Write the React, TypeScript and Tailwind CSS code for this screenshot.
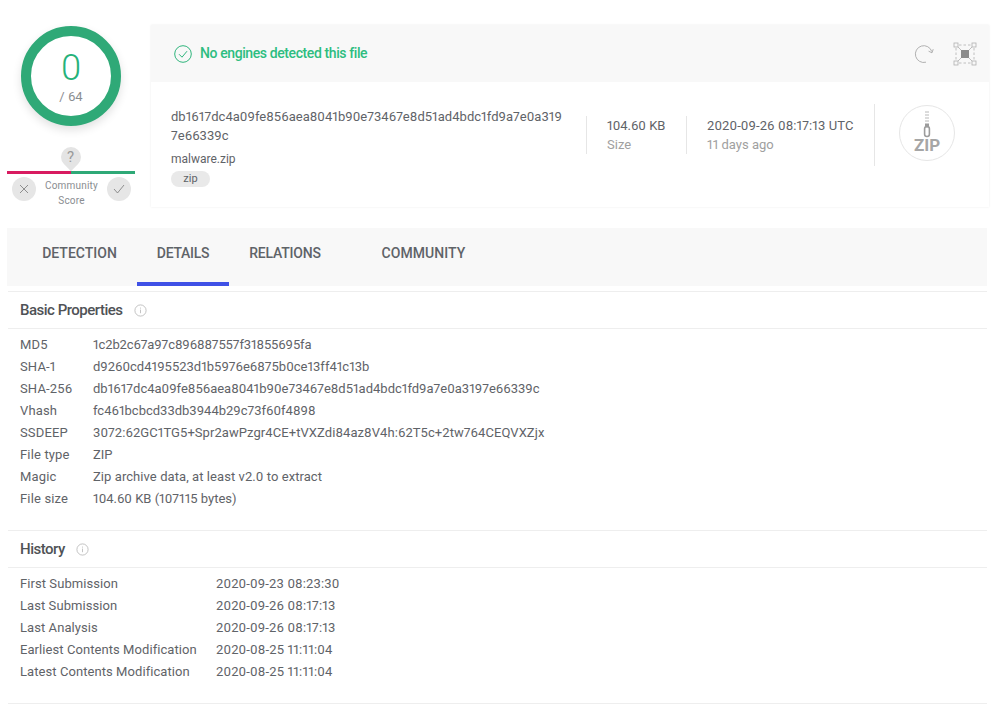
const font = "font-['Roboto',sans-serif]";

const props: [string, string, string][] = [
  ["MD5", "1c2b2c67a97c896887557f31855695fa", "tracking-[-0.12px]"],
  ["SHA-1", "d9260cd4195523d1b5976e6875b0ce13ff41c13b", "tracking-normal"],
  ["SHA-256", "db1617dc4a09fe856aea8041b90e73467e8d51ad4bdc1fd9a7e0a3197e66339c", "tracking-normal"],
  ["Vhash", "fc461bcbcd33db3944b29c73f60f4898", "tracking-normal"],
  ["SSDEEP", "3072:62GC1TG5+Spr2awPzgr4CE+tVXZdi84az8V4h:62T5c+2tw764CEQVXZjx", "tracking-[0.07px]"],
  ["File type", "ZIP", "tracking-normal"],
  ["Magic", "Zip archive data, at least v2.0 to extract", "tracking-[0.07px]"],
  ["File size", "104.60 KB (107115 bytes)", "tracking-normal"],
];
const hist: [string, string][] = [
  ["First Submission", "2020-09-23 08:23:30"],
  ["Last Submission", "2020-09-26 08:17:13"],
  ["Last Analysis", "2020-09-26 08:17:13"],
  ["Earliest Contents Modification", "2020-08-25 11:11:04"],
  ["Latest Contents Modification", "2020-08-25 11:11:04"],
];

function Info() {
  return (
    <svg width="13" height="13" viewBox="0 0 13 13" fill="none" stroke="#b5b5b5" strokeWidth="0.8">
      <circle cx="6.5" cy="6.5" r="5.6" />
      <path d="M6.5 5.6v3.6M6.5 3.6v1" />
    </svg>
  );
}

function ZipIcon() {
  return (
    <div className="w-14 h-14 rounded-full border border-[#e6e6e6] flex flex-col items-center justify-start pt-[5px]">
      <svg width="10" height="27" viewBox="0 0 10 27" fill="none">
        <path d="M3 1h4M3 4h4M3 7h4M3 10h4" stroke="#b8b8b8" strokeWidth="1" />
        <rect x="2.6" y="15.5" width="4.8" height="10" rx="2.2" fill="#fff" stroke="#9c9c9c" strokeWidth="1.6" />
        <rect x="3" y="12.5" width="4" height="4" fill="#9c9c9c" />
      </svg>
      <span className="text-[17px] leading-[15px] font-bold text-[#a6a6a6]">ZIP</span>
    </div>
  );
}

export default function App() {
  return (
    <div className={`${font} proportional-nums w-[994px] h-[704px] bg-white overflow-hidden text-[#5f6368]`}>
      <div className="flex pt-[25px] pl-[7px] h-[228px]">
        <div className="w-[128px] flex flex-col items-center shrink-0">
          <div className="w-[100px] h-[100px] rounded-full border-[10px] border-[#2fa977] bg-white flex flex-col items-center shadow-[0_4px_10px_rgba(0,0,0,0.12)] mt-px">
            <span className="text-[36px] leading-[40px] mt-[12px] text-[#26b27a] font-light">0</span>
            <span className="text-[13px] leading-4 mt-px text-[#8a8d91]">/ 64</span>
          </div>
          <div className="relative w-full h-[3px] mt-[45px] flex">
            <div className="w-1/2 bg-[#d81b60]" />
            <div className="w-1/2 bg-[#2fa977]" />
            <div className="absolute left-[54px] -top-[24px] w-5 h-5 rounded-full rounded-br-none rotate-45 bg-[#e4e4e4] flex items-center justify-center">
              <span className="-rotate-45 text-[15px] text-[#9a9a9a]">?</span>
            </div>
          </div>
          <div className="w-full flex items-start justify-between pl-[5px] pr-[4px] mt-[3px]">
            <div className="w-6 h-6 rounded-full bg-[#e6e6e6] flex items-center justify-center">
              <svg width="10" height="10" viewBox="0 0 10 10" stroke="#777" strokeWidth="0.8"><path d="M1 1l8 8M9 1l-8 8" /></svg>
            </div>
            <div className="text-[10px] leading-[15px] text-center text-[#8a8d91] pt-px tracking-[0.2px]">Community<br />Score</div>
            <div className="w-6 h-6 rounded-full bg-[#e6e6e6] flex items-center justify-center">
              <svg width="12" height="10" viewBox="0 0 12 10" fill="none" stroke="#777" strokeWidth="0.8"><path d="M1 5l3.5 4L11 1" /></svg>
            </div>
          </div>
        </div>

        <div className="w-[838px] ml-[16px] shrink-0 shadow-[0_0_2px_rgba(0,0,0,0.08)] h-[182px]">
          <div className="h-[57px] bg-[#f8f8f8] flex items-center pl-[23px] pr-[12px]">
            <svg width="18" height="18" viewBox="0 0 18 18" fill="none" stroke="#2fb57c" strokeWidth="1"><circle cx="9" cy="9" r="8.3" /><path d="M5 9.2l3 3 5-6" /></svg>
            <span className="ml-2 text-[14px] font-medium text-[#2dbd80] tracking-[-0.4px]">No engines detected this file</span>
            <div className="ml-auto flex items-center gap-[19px]">
              <svg width="20" height="20" viewBox="0 0 20 20" fill="none" stroke="#a8a8a8" strokeWidth="0.9"><path d="M12 18.2A8.4 8.4 0 1 1 17.8 7.6" /><path d="M14.6 7.2l3.4 1.6 1.2-3.6" /></svg>
              <svg width="24" height="24" viewBox="0 0 24 24" fill="none" stroke="#b0b0b0" strokeWidth="0.8">
                <rect x="1" y="1" width="4" height="4" /><rect x="19" y="1" width="4" height="4" /><rect x="1" y="19" width="4" height="4" /><rect x="19" y="19" width="4" height="4" />
                <path d="M6 3h12M6 21h12M3 6v12M21 6v12" strokeDasharray="2.5 2" />
                <path d="M8 8h8v8H8z" fill="#8c8c8c" stroke="none" />
                <path d="M5 5l3 3M19 5l-3 3M5 19l3-3M19 19l-3-3" />
              </svg>
            </div>
          </div>
          <div className="flex items-start h-[125px] pl-[20px]">
            <div className="w-[415px] shrink-0 pt-[25px]">
              <div className="text-[13px] leading-[19px] break-all text-[#5f6368] w-[393px] tracking-[0.03px]">db1617dc4a09fe856aea8041b90e73467e8d51ad4bdc1fd9a7e0a3197e66339c</div>
              <div className="text-[12px] leading-4 mt-[6px]">malware.zip</div>
              <div className="mt-[4px] w-[39px] h-4 rounded-full bg-[#e9e9e9] text-[11px] leading-4 text-center">zip</div>
            </div>
            <div className="flex items-center h-[62px] mt-[22px]">
              <div className="h-[38px] w-px bg-[#e6e6e6]" />
              <div className="w-[99px] pl-5 text-[13px] leading-[19px] shrink-0">
                <div>104.60 KB</div>
                <div className="text-[#a0a0a0]">Size</div>
              </div>
              <div className="h-[38px] w-px bg-[#e6e6e6]" />
              <div className="w-[187px] pl-5 text-[13px] leading-[19px] shrink-0">
                <div className="tracking-[0.1px]">2020-09-26 08:17:13 UTC</div>
                <div className="text-[#a0a0a0]">11 days ago</div>
              </div>
              <div className="h-[62px] w-px bg-[#e6e6e6]" />
              <div className="ml-6 -mt-[4px]"><ZipIcon /></div>
            </div>
          </div>
        </div>
      </div>

      <div className="ml-[7px] w-[980px] h-[58px] bg-[#f8f8f8] flex text-[14px] font-medium text-[#5f6368]">
        <div className="w-[130px] flex items-center justify-center pb-[8px] pl-[15px]">DETECTION</div>
        <div className="w-[92px] flex items-center justify-center pb-[4px] border-b-4 border-[#3f51e6] tracking-[-0.3px]">DETAILS</div>
        <div className="w-[112px] flex items-center justify-center pb-[8px] tracking-[-0.2px]">RELATIONS</div>
        <div className="w-[165px] flex items-center justify-center pb-[8px] tracking-[0.05px]">COMMUNITY</div>
      </div>

      <div className="ml-[8px] w-[979px] mt-[5px] border-t border-[#eeeeee]">
        <div className="h-[37px] flex items-center pl-3 border-b border-[#eeeeee] gap-[11px]">
          <span className="text-[15px] font-medium text-[#4f5256] tracking-[-0.5px]">Basic Properties</span>
          <Info />
        </div>
        <div className="pl-3 pt-[5px] pb-[20px] border-b border-[#eeeeee]">
          {props.map(([k, v, t]) => (
            <div key={k} className="flex h-[22px] items-center text-[13px]">
              <span className="w-[73px] shrink-0 tracking-[0.15px]">{k}</span>
              <span className={t}>{v}</span>
            </div>
          ))}
        </div>
        <div className="h-[37px] flex items-center pl-3 border-b border-[#eeeeee] gap-[11px]">
          <span className="text-[15px] font-medium text-[#4f5256] tracking-[-0.5px]">History</span>
          <Info />
        </div>
        <div className="pl-3 pt-[5px] pb-[20px] border-b border-[#eeeeee]">
          {hist.map(([k, v]) => (
            <div key={k} className="flex h-[22px] items-center text-[13px]">
              <span className="w-[196px] shrink-0 tracking-[0.07px]">{k}</span>
              <span className="tracking-[0.15px]">{v}</span>
            </div>
          ))}
        </div>
      </div>
    </div>
  );
}
